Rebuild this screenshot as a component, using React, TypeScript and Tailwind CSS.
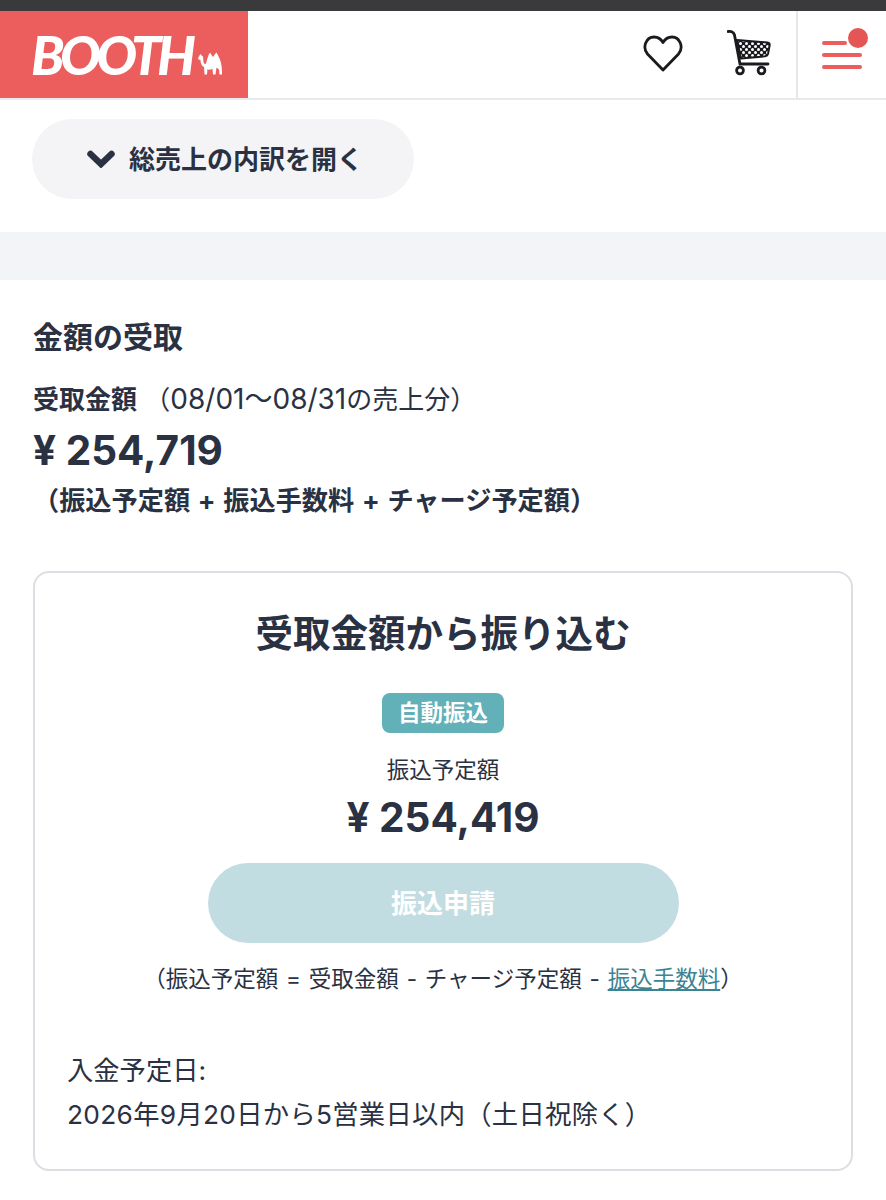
const font = { fontFamily: 'Inter, "Noto Sans CJK JP", sans-serif' };

function Camel() {
  return (
    <svg width="24" height="23" viewBox="0 0 24 23" fill="#fff">
      <path d="M0 6 L1.500 3.500 L2.500 2 L3.500 3.500 L5 4.500 L5.500 10 C6 12 7 12.500 8 11.500 C9 8 10 3 12 0.500 C13 2 14 4 15 5 C16 4 17 1.500 18.500 0.500 C20 3 22 7 23 11 C23.800 14 24 18 24 22.500 L21.500 22.500 L21 17.500 L18.500 15.500 L17.500 22.500 L15 22.500 L14.500 17 C11 18 10 18 9.500 17 L9 22.500 L6.500 22.500 L6 15 C3.500 14 2.500 11 2.500 8 L0.500 7.500 Z" />
    </svg>
  );
}

function HeartIcon() {
  return (
    <svg width="40" height="37" viewBox="0 0 40 37">
      <path d="M20 35 L4.500 19 C-1 12.500 3 2 11 2 C15 2 18 4 20 7.500 C22 4 25 2 29 2 C37 2 41 12.500 35.500 19 Z" fill="none" stroke="#1a1a1f" strokeWidth="2.800" strokeLinejoin="round" />
    </svg>
  );
}

function Cart() {
  return (
    <svg width="44" height="46" viewBox="0 0 44 46">
      <defs>
        <pattern id="cart-dots" width="6" height="6" patternUnits="userSpaceOnUse">
          <rect width="6" height="6" fill="#1a1a1f" />
          <circle cx="1.500" cy="1.500" r="1.500" fill="#fff" />
          <circle cx="4.500" cy="4.500" r="1.500" fill="#fff" />
        </pattern>
      </defs>
      <path d="M1 1.500 C5 1 6.500 2 7.500 5 L13 34 L41 34" fill="none" stroke="#1a1a1f" strokeWidth="2.800" strokeLinecap="round" />
      <path d="M10 10 L40.500 12.500 C42 12.800 42.800 13.500 42.700 15 L41 24 C40.600 25.500 39.500 26 38 26.300 L14 28.500 Z" fill="url(#cart-dots)" stroke="#1a1a1f" strokeWidth="2" strokeLinejoin="round" />
      <circle cx="13" cy="40.500" r="3.400" fill="#fff" stroke="#1a1a1f" strokeWidth="2.800" />
      <circle cx="34.500" cy="40.500" r="3.400" fill="#fff" stroke="#1a1a1f" strokeWidth="2.800" />
    </svg>
  );
}

function Chevron() {
  return (
    <svg width="28" height="18" viewBox="0 0 28 18">
      <path d="M3.500 4 L14 14 L24.500 4" fill="none" stroke="#2a3142" strokeWidth="6.500" strokeLinecap="round" strokeLinejoin="miter" />
    </svg>
  );
}

export default function App() {
  return (
    <div style={font} className="w-[886px] h-[1200px] overflow-hidden bg-white text-[#2a3142]">
      <div className="h-[11px] bg-[#3a3a3c]" />

      <header className="h-[89px] flex items-stretch border-b-2 border-[#e9eaed]">
        <div className="w-[248px] bg-[#ec5e5e] flex items-center pl-[31px] gap-[7px]">
          <span className="text-[54px] leading-none font-black italic text-white tracking-[-4.500px]" style={{ fontFamily: 'Lato, sans-serif' }}>BOOTH</span>
          <div className="mt-[18px]"><Camel /></div>
        </div>
        <div className="flex-1 flex items-center justify-end">
          <div className="mr-[44px] mb-[3px]"><HeartIcon /></div>
          <div className="mr-[25px] mb-[4px]"><Cart /></div>
          <div className="relative w-[90px] self-stretch border-l-2 border-[#e6e7ea] flex flex-col justify-center gap-[8px] pl-[24px]">
            <div className="h-[4px] w-[25px] rounded-full bg-[#ec5e5e]" />
            <div className="h-[4px] w-[40px] rounded-full bg-[#ec5e5e]" />
            <div className="h-[4px] w-[40px] rounded-full bg-[#ec5e5e]" />
            <div className="absolute top-[17px] left-[50px] w-[20px] h-[20px] rounded-full bg-[#e45555]" />
          </div>
        </div>
      </header>

      <div className="pt-[19px] pl-[32px] pb-[33px]">
        <div className="w-[382px] h-[80px] rounded-full bg-[#f4f4f6] flex items-center pl-[55px] gap-[14px]">
          <Chevron />
          <span className="text-[26px] font-bold">総売上の内訳を開く</span>
        </div>
      </div>

      <div className="h-[48px] bg-[#f3f4f8]" />

      <section className="px-[33px]">
        <h2 className="mt-[37px] text-[30px] leading-[40px] font-bold">金額の受取</h2>
        <p className="mt-[22px] text-[26px] leading-[40px] whitespace-nowrap">
          <span className="font-bold">受取金額</span>
          <span> （<span className="text-[28px]">08/01〜08/31</span>の売上分）</span>
        </p>
        <p className="mt-[6px] text-[40.500px] leading-[50px] font-bold">¥ 254,719</p>
        <p className="mt-[6px] text-[26.200px] leading-[38px] font-bold [word-spacing:1.500px]">（振込予定額 + 振込手数料 + チャージ予定額）</p>

        <div className="mt-[51px] w-[820px] h-[600px] rounded-[16px] border-2 border-[#dcdee3] flex flex-col items-center">
          <h3 className="mt-[36px] text-[37.500px] leading-[50px] font-bold">受取金額から振り込む</h3>
          <div className="mt-[34px] w-[122px] h-[40px] rounded-[8px] bg-[#62b0b8] text-white text-[22.500px] font-bold flex items-center justify-center">自動振込</div>
          <p className="mt-[20px] text-[22.500px] leading-[34px]">振込予定額</p>
          <p className="mt-[6px] text-[40.500px] leading-[50px] font-bold">¥ 254,419</p>
          <div className="mt-[20px] w-[471px] h-[80px] rounded-full bg-[#c2dde1] text-white text-[26px] font-bold flex items-center justify-center">振込申請</div>
          <p className="mt-[18px] text-[22.500px] leading-[36px] [word-spacing:1.500px]">
            （振込予定額 = 受取金額 - チャージ予定額 - <span className="text-[#3b8494] underline">振込手数料</span>）
          </p>
          <div className="self-start mt-[52px] pl-[32px] text-[26.300px] leading-[44px] whitespace-nowrap">
            <p>入金予定日:</p>
            <p className="tracking-[0.300px]">2026年9月20日から5営業日以内（土日祝除く）</p>
          </div>
        </div>
      </section>
    </div>
  );
}
